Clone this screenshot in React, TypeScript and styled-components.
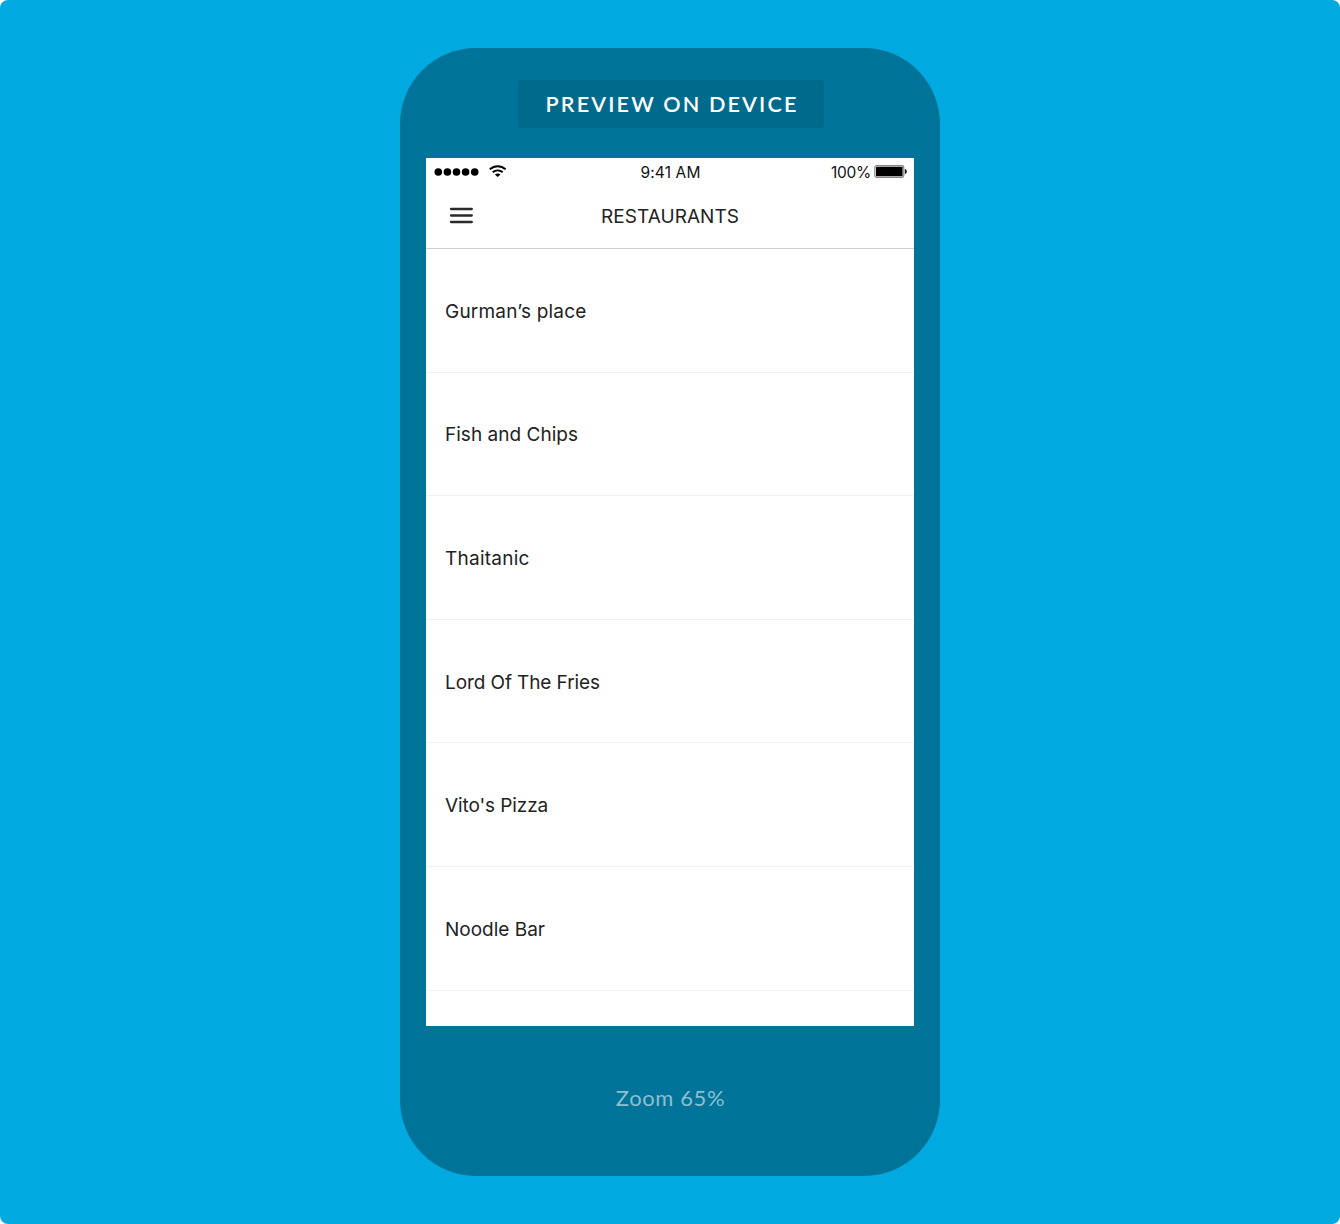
import React from 'react';
import styled, { createGlobalStyle } from 'styled-components';

const GlobalStyle = createGlobalStyle`
  *, *::before, *::after { box-sizing: border-box; }
  body { margin: 0; background: #fff; }
`;

const Stage = styled.main`
  display: flex;
  justify-content: center;
  align-items: flex-start;
  width: 1340px;
  height: 1224px;
  padding-top: 48px;
  border-radius: 8px;
  background: #00aae1;
`;

const Device = styled.section`
  display: flex;
  flex-direction: column;
  align-items: center;
  width: 540px;
  height: 1128px;
  padding: 32px 26px 0;
  border-radius: 76px;
  background: #007399;
`;

const PreviewButton = styled.button`
  width: 306px;
  height: 48px;
  margin: 0 0 30px 2px;
  padding: 1px 0 0 2px;
  border: 0;
  border-radius: 4px;
  background: #006a8c;
  color: #fff;
  font: 600 21.6px/47px Lato, sans-serif;
  letter-spacing: 2.15px;
  white-space: nowrap;
`;

const Screen = styled.div`
  width: 488px;
  height: 868px;
  overflow: hidden;
  background: #fff;
  color: #222;
`;

const StatusBar = styled.div`
  display: grid;
  grid-template-columns: 1fr auto 1fr;
  align-items: start;
  height: 28px;
  padding: 0 7px 0 8px;
  color: #111;
  font: 15.5px/28px Inter, sans-serif;
`;

const Signal = styled.div`
  display: flex;
  align-items: center;
  gap: 9px;
  height: 27px;
`;

const Clock = styled.time`
  padding-top: 1px;
  letter-spacing: 0.15px;
`;

const Power = styled.div`
  display: flex;
  align-items: center;
  justify-content: flex-end;
  gap: 3px;
  height: 27px;
`;

const Percent = styled.span`
  padding-top: 2px;
  letter-spacing: -0.3px;
`;

const NavBar = styled.header`
  display: grid;
  grid-template-columns: 1fr auto 1fr;
  align-items: center;
  height: 63px;
  padding: 0 23px 3px;
  border-bottom: 1px solid #d0d0d0;
`;

const MenuButton = styled.button`
  display: flex;
  width: 25px;
  margin: 0;
  padding: 0;
  border: 0;
  background: none;
`;

const Title = styled.h1`
  margin: 0;
  padding-top: 2px;
  font: 400 19px/24px Inter, sans-serif;
  letter-spacing: 0.05px;
`;

const List = styled.ul`
  margin: 0;
  padding: 0;
  list-style: none;
`;

const Item = styled.li<{ $spacing: number }>`
  display: flex;
  align-items: center;
  height: 123.6px;
  padding: 3px 19px 0;
  border-bottom: 1px solid #f1f1f1;
  font: 400 19px/24px Inter, sans-serif;
  letter-spacing: ${(p) => p.$spacing}px;
`;

const ZoomLabel = styled.p`
  margin: 58px 0 0 1px;
  color: #8cc0d2;
  font: 400 22px/28px Lato, sans-serif;
  letter-spacing: 0.6px;
`;

const restaurants = [
  { name: 'Gurman’s place', spacing: 0.2 },
  { name: 'Fish and Chips', spacing: 0.02 },
  { name: 'Thaitanic', spacing: 0.25 },
  { name: 'Lord Of The Fries', spacing: -0.1 },
  { name: "Vito's Pizza", spacing: -0.1 },
  { name: 'Noodle Bar', spacing: 0 },
];

const SignalDots = () => (
  <svg width="46" height="10" viewBox="0 0 46 10" fill="#000">
    {[0, 1, 2, 3, 4].map((i) => (
      <circle key={i} cx={4.3 + i * 9.1} cy="5" r="3.8" />
    ))}
  </svg>
);

const WifiIcon = () => (
  <svg width="18" height="13" viewBox="0 0 18 13" fill="none" stroke="#000" strokeWidth="2">
    <path d="M0.8 4.3C5.4.1 12 .1 16.6 4.3" />
    <path d="M3.7 7.3C6.6 4.8 10.8 4.8 13.7 7.3" />
    <path d="M8.7 12 5.9 9.5C7.4 8.2 10 8.2 11.5 9.5Z" fill="#000" stroke="none" />
  </svg>
);

const BatteryIcon = () => (
  <svg width="33" height="13" viewBox="0 0 33 13">
    <rect x="0.8" y="0.6" width="29" height="11.8" rx="1.8" fill="#fff" stroke="#858585" strokeWidth="1.2" />
    <rect x="2" y="1.7" width="26.6" height="9.6" rx="0.6" fill="#000" />
    <path d="M30.9 4.2H31.5C33.2 4.6 33.2 8.4 31.5 8.8H30.9Z" fill="#111" />
  </svg>
);

const MenuIcon = () => (
  <svg width="25" height="18" viewBox="0 0 25 18" stroke="#2b2b2b" strokeWidth="2.3" strokeLinecap="round">
    <path d="M2 2H22.8M2 8.5H22.8M2 15H22.8" />
  </svg>
);

export default function App() {
  return (
    <>
      <GlobalStyle />
      <Stage>
        <Device>
          <PreviewButton type="button">PREVIEW ON DEVICE</PreviewButton>
          <Screen>
            <StatusBar>
              <Signal>
                <SignalDots />
                <WifiIcon />
              </Signal>
              <Clock>9:41 AM</Clock>
              <Power>
                <Percent>100%</Percent>
                <BatteryIcon />
              </Power>
            </StatusBar>
            <NavBar>
              <MenuButton type="button" aria-label="Menu">
                <MenuIcon />
              </MenuButton>
              <Title>RESTAURANTS</Title>
            </NavBar>
            <List>
              {restaurants.map((r) => (
                <Item key={r.name} $spacing={r.spacing}>
                  {r.name}
                </Item>
              ))}
            </List>
          </Screen>
          <ZoomLabel>Zoom 65%</ZoomLabel>
        </Device>
      </Stage>
    </>
  );
}
